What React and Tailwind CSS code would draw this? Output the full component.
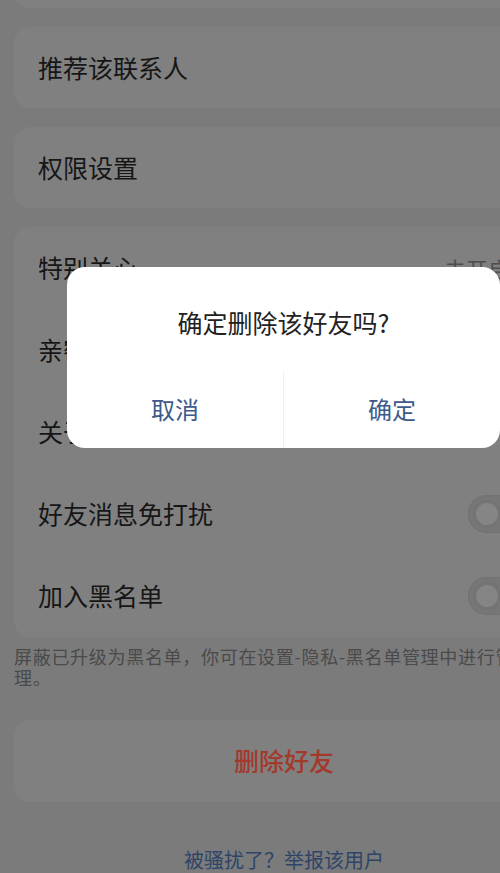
import { ChevronRight } from "lucide-react";

const font = { fontFamily: '"Noto Sans CJK SC", "Noto Sans", sans-serif' };

function Switch() {
  return (
    <div className="flex h-[38px] w-[62px] items-center rounded-full bg-[#767676] px-[5px] shadow-[inset_0_0_0_1px_#727272]">
      <div className="h-[28px] w-[28px] rounded-full border-[3px] border-[#747474] bg-[#858585]" />
    </div>
  );
}

function Row({ label, right, h = "h-[82px]" }) {
  return (
    <div className={`flex ${h} items-center justify-between pl-6 pr-6`}>
      <span className="text-[25px] text-[#161616]">{label}</span>
      {right}
    </div>
  );
}

function ConfirmDialog() {
  return (
    <div className="absolute left-[67px] top-[267px] flex h-[181px] w-[433px] flex-col rounded-[18px] bg-white">
      <div className="flex h-[103px] items-end justify-center pb-[35px]">
        <span className="text-[25px] leading-none text-[#222]">确定删除该好友吗?</span>
      </div>
      <div className="flex flex-1">
        <button className="flex flex-1 items-center justify-center text-[24px] text-[#3d5a8a]">取消</button>
        <div className="w-px bg-[#f1f1f1]" />
        <button className="flex flex-1 items-center justify-center text-[24px] text-[#3d5a8a]">确定</button>
      </div>
    </div>
  );
}

export default function App() {
  return (
    <div className="relative h-[873px] w-[500px] overflow-hidden bg-[#7b7b7b]" style={font}>
      <div className="flex w-[568px] flex-col px-[14px]">
        <div className="-mt-[72px] h-[80px] rounded-2xl bg-[#808080]" />

        <div className="mt-[19px] rounded-2xl bg-[#808080]">
          <Row label="推荐该联系人" h="h-[81px]" />
        </div>

        <div className="mt-[19px] rounded-2xl bg-[#808080]">
          <Row label="权限设置" h="h-[81px]" />
        </div>

        <div className="mt-[19px] rounded-2xl bg-[#808080]">
          <Row
            label="特别关心"
            right={
              <span className="flex items-center text-[22px] text-[#4e4e4e]">
                未开启
                <ChevronRight size={20} strokeWidth={2} className="text-[#5a5a5a]" />
              </span>
            }
          />
          <Row label="亲密关系" />
          <Row label="关于TA" />
          <Row label="好友消息免打扰" right={<Switch />} />
          <Row label="加入黑名单" right={<Switch />} />
        </div>

        <p className="mt-[9px] w-[530px] text-[18px] leading-[21px] tracking-[0.7px] text-[#4a4a4a]">
          屏蔽已升级为黑名单，你可在设置-隐私-黑名单管理中进行管理。
        </p>

        <div className="mt-[32px] flex h-[82px] items-center justify-center rounded-2xl bg-[#808080]">
          <span className="text-[25px] font-medium text-[#a3392b]">删除好友</span>
        </div>

        <div className="mt-[43px] flex justify-center">
          <span className="text-[20px] text-[#2e4568]">被骚扰了？举报该用户</span>
        </div>
      </div>

      <ConfirmDialog />
    </div>
  );
}
